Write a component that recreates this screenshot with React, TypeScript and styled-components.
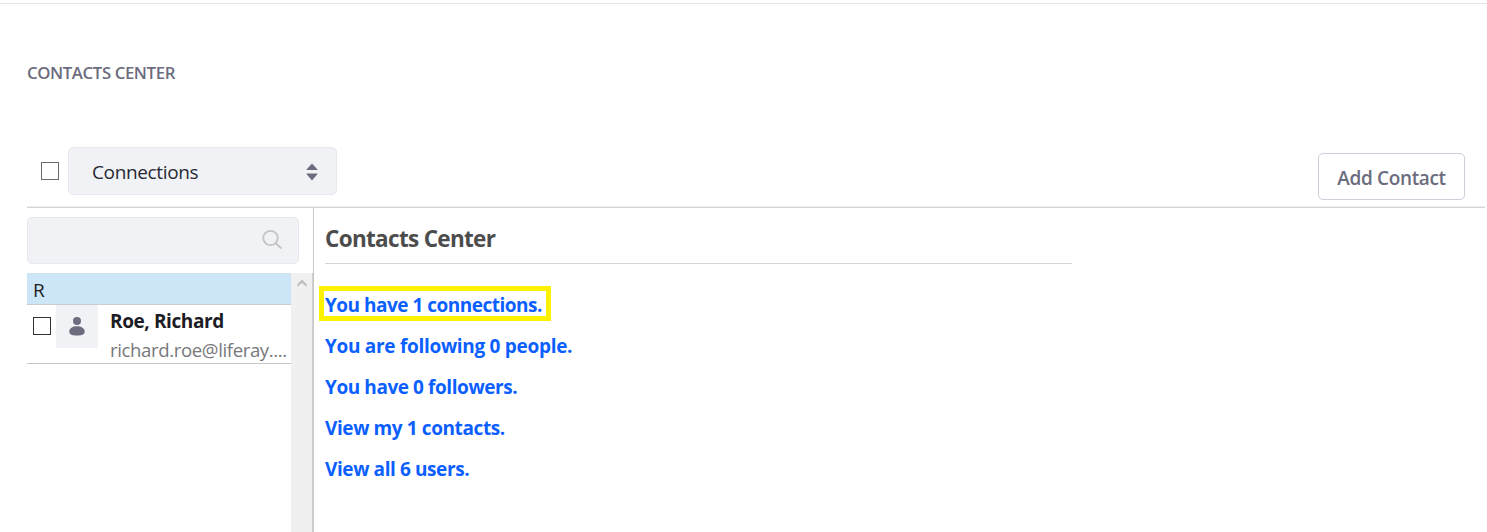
import React from "react";
import styled, { createGlobalStyle } from "styled-components";

const GlobalStyle = createGlobalStyle`
  *, *::before, *::after { box-sizing: border-box; }
  body {
    margin: 0;
    background: #fff;
    color: #1c1c24;
    font-family: "Open Sans", "Noto Sans", sans-serif;
    font-size: 19px;
    overflow: hidden;
  }
`;

const Page = styled.div`
  display: flex;
  flex-direction: column;
  height: 532px;
  padding: 3px 2px 0 0;
`;

const TopRule = styled.div`
  flex: none;
  height: 1px;
  margin-right: -2px;
  background: #e4e4e6;
`;

const PortletTitle = styled.h1`
  flex: none;
  height: 24px;
  margin: 56px 0 0 27px;
  font-size: 16.8px;
  font-weight: 600;
  line-height: 26px;
  letter-spacing: -0.4px;
  color: #6b6c7e;
  text-transform: uppercase;
  white-space: nowrap;
`;

const Toolbar = styled.div`
  flex: none;
  display: flex;
  align-items: flex-start;
  height: 61px;
  margin: 63px 0 0 27px;
  padding: 0 20px 0 14px;
  border-bottom: 1px solid #d3d3d3;
  box-shadow: 0 -1px 0 #ededed inset;
`;

const Checkbox = styled.input<{ $color: string }>`
  appearance: none;
  flex: none;
  width: 18px;
  height: 18px;
  margin: 0;
  border: 1px solid ${(p) => p.$color};
  border-radius: 0;
  background: #fff;
`;

const ToolbarCheck = styled.div`
  display: flex;
  padding-top: 15px;
`;

const Select = styled.button`
  display: flex;
  align-items: center;
  justify-content: space-between;
  width: 269px;
  height: 48px;
  margin-left: 9px;
  padding: 2px 18px 0 23px;
  border: 1px solid #e7e7ed;
  border-radius: 5px;
  background: #f1f2f5;
  color: #272833;
  font: inherit;
  letter-spacing: -0.36px;
`;

const AddButton = styled.button`
  width: 147px;
  height: 47px;
  margin: 6px 0 0 auto;
  padding: 3px 0 0;
  border: 1px solid #cdced9;
  border-radius: 5px;
  background: #fff;
  color: #6b6c7e;
  font: inherit;
  font-weight: 600;
  letter-spacing: -0.35px;
  white-space: nowrap;
`;

const Content = styled.div`
  flex: 1;
  display: flex;
  min-height: 0;
  margin-left: 27px;
`;

const Sidebar = styled.aside`
  flex: none;
  display: flex;
  flex-direction: column;
  width: 287px;
  padding-top: 9px;
  border-right: 1px solid #c8c8c8;
`;

const SearchBox = styled.div`
  flex: none;
  display: flex;
  align-items: center;
  justify-content: flex-end;
  width: 272px;
  height: 47px;
  padding: 0 15px 1px 0;
  border: 1px solid #e7e7ed;
  border-radius: 5px;
  background: #f1f2f5;
`;

const ListPane = styled.div`
  flex: 1;
  display: flex;
  margin-top: 9px;
  border-right: 1px solid #cfcfcf;
`;

const ContactList = styled.div`
  flex: none;
  width: 264px;
`;

const Scrollbar = styled.div`
  flex: 1;
  display: flex;
  justify-content: center;
  padding-top: 6px;
  background: #f0f0f0;
`;

const LetterRow = styled.div`
  height: 32px;
  padding: 2px 0 0 6px;
  border-bottom: 1px solid #c8cdd2;
  background: #cce5f7;
  line-height: 30px;
`;

const ContactRow = styled.div`
  display: flex;
  height: 59px;
  border-bottom: 1px solid #c8c8c8;
`;

const RowCheck = styled.div`
  flex: none;
  display: flex;
  width: 29px;
  padding: 12px 0 0 6px;
`;

const Avatar = styled.div`
  flex: none;
  display: flex;
  align-items: center;
  justify-content: center;
  width: 42px;
  height: 43px;
  background: #f1f2f5;
`;

const ContactInfo = styled.div`
  padding-left: 12px;
  white-space: nowrap;
`;

const ContactName = styled.div`
  height: 31px;
  font-weight: 700;
  line-height: 32px;
  letter-spacing: -0.4px;
`;

const ContactEmail = styled.div`
  line-height: 28px;
  font-size: 18.6px;
  color: #77777a;
  letter-spacing: -0.38px;
`;

const Main = styled.main`
  display: flex;
  flex-direction: column;
  align-items: flex-start;
  width: 758px;
  padding-left: 11px;
`;

const Heading = styled.h2`
  align-self: stretch;
  height: 56px;
  margin: 0;
  border-bottom: 1px solid #d5d5d5;
  font-size: 22.5px;
  font-weight: 700;
  line-height: 62px;
  letter-spacing: -0.68px;
  color: #4c4c4c;
`;

const Links = styled.div`
  display: flex;
  flex-direction: column;
  align-items: flex-start;
  gap: 6px;
  margin: 22px 0 0 -6px;
`;

const SummaryLink = styled.a<{ $marked?: boolean; $spacing: number }>`
  display: block;
  height: 35px;
  width: ${(p) => (p.$marked ? "232px" : "auto")};
  padding: 0 1px;
  border: 5px solid ${(p) => (p.$marked ? "#fff200" : "transparent")};
  color: #0b5fff;
  font-weight: 700;
  line-height: 29px;
  letter-spacing: ${(p) => p.$spacing}px;
  white-space: nowrap;
  text-decoration: none;
`;

const links = [
  { text: "You have 1 connections.", marked: true, spacing: -0.5 },
  { text: "You are following 0 people.", spacing: -0.3 },
  { text: "You have 0 followers.", spacing: -0.43 },
  { text: "View my 1 contacts.", spacing: -0.4 },
  { text: "View all 6 users.", spacing: -0.4 },
];

const CaretDouble = () => (
  <svg width="12" height="18" viewBox="0 0 12 18" fill="#6b6c7e">
    <path d="M6 .5 11.3 6.2Q11.8 7 11 7H1Q.2 7 .7 6.2Z" />
    <path d="M6 17.5 11.3 11.3Q11.8 10.5 11 10.5H1Q.2 10.5 .7 11.3Z" />
  </svg>
);

const SearchIcon = () => (
  <svg width="22" height="22" viewBox="0 0 22 22" fill="none" stroke="#c3c3c3" strokeWidth="1.8">
    <circle cx="9.5" cy="9" r="7.2" />
    <path d="m14.500 14 6 5.500" />
  </svg>
);

const UserIcon = () => (
  <svg width="16" height="19" viewBox="0 0 16 19" fill="#6b6c7e">
    <circle cx="8" cy="4" r="4" />
    <path d="M8 9.300c4.400 0 7.700 2 7.700 5.200 0 2.700-2 4-7.700 4s-7.700-1.300-7.700-4C.3 11.300 3.600 9.300 8 9.300Z" />
  </svg>
);

const ArrowUp = () => (
  <svg width="10" height="9" viewBox="0 0 10 9" fill="#bdbdbd">
    <path d="M5 .5 9.500 5v3L5 3.700 .5 8V5Z" />
  </svg>
);

export default function App() {
  return (
    <>
      <GlobalStyle />
      <Page>
        <TopRule />
        <PortletTitle>Contacts Center</PortletTitle>
        <Toolbar>
          <ToolbarCheck>
            <Checkbox type="checkbox" $color="#6a6a6a" />
          </ToolbarCheck>
          <Select>
            Connections
            <CaretDouble />
          </Select>
          <AddButton>Add Contact</AddButton>
        </Toolbar>
        <Content>
          <Sidebar>
            <SearchBox>
              <SearchIcon />
            </SearchBox>
            <ListPane>
              <ContactList>
                <LetterRow>R</LetterRow>
                <ContactRow>
                  <RowCheck>
                    <Checkbox type="checkbox" $color="#333" />
                  </RowCheck>
                  <Avatar>
                    <UserIcon />
                  </Avatar>
                  <ContactInfo>
                    <ContactName>Roe, Richard</ContactName>
                    <ContactEmail>richard.roe@liferay....</ContactEmail>
                  </ContactInfo>
                </ContactRow>
              </ContactList>
              <Scrollbar>
                <ArrowUp />
              </Scrollbar>
            </ListPane>
          </Sidebar>
          <Main>
            <Heading>Contacts Center</Heading>
            <Links>
              {links.map((l) => (
                <SummaryLink key={l.text} $marked={l.marked} $spacing={l.spacing}>
                  {l.text}
                </SummaryLink>
              ))}
            </Links>
          </Main>
        </Content>
      </Page>
    </>
  );
}
